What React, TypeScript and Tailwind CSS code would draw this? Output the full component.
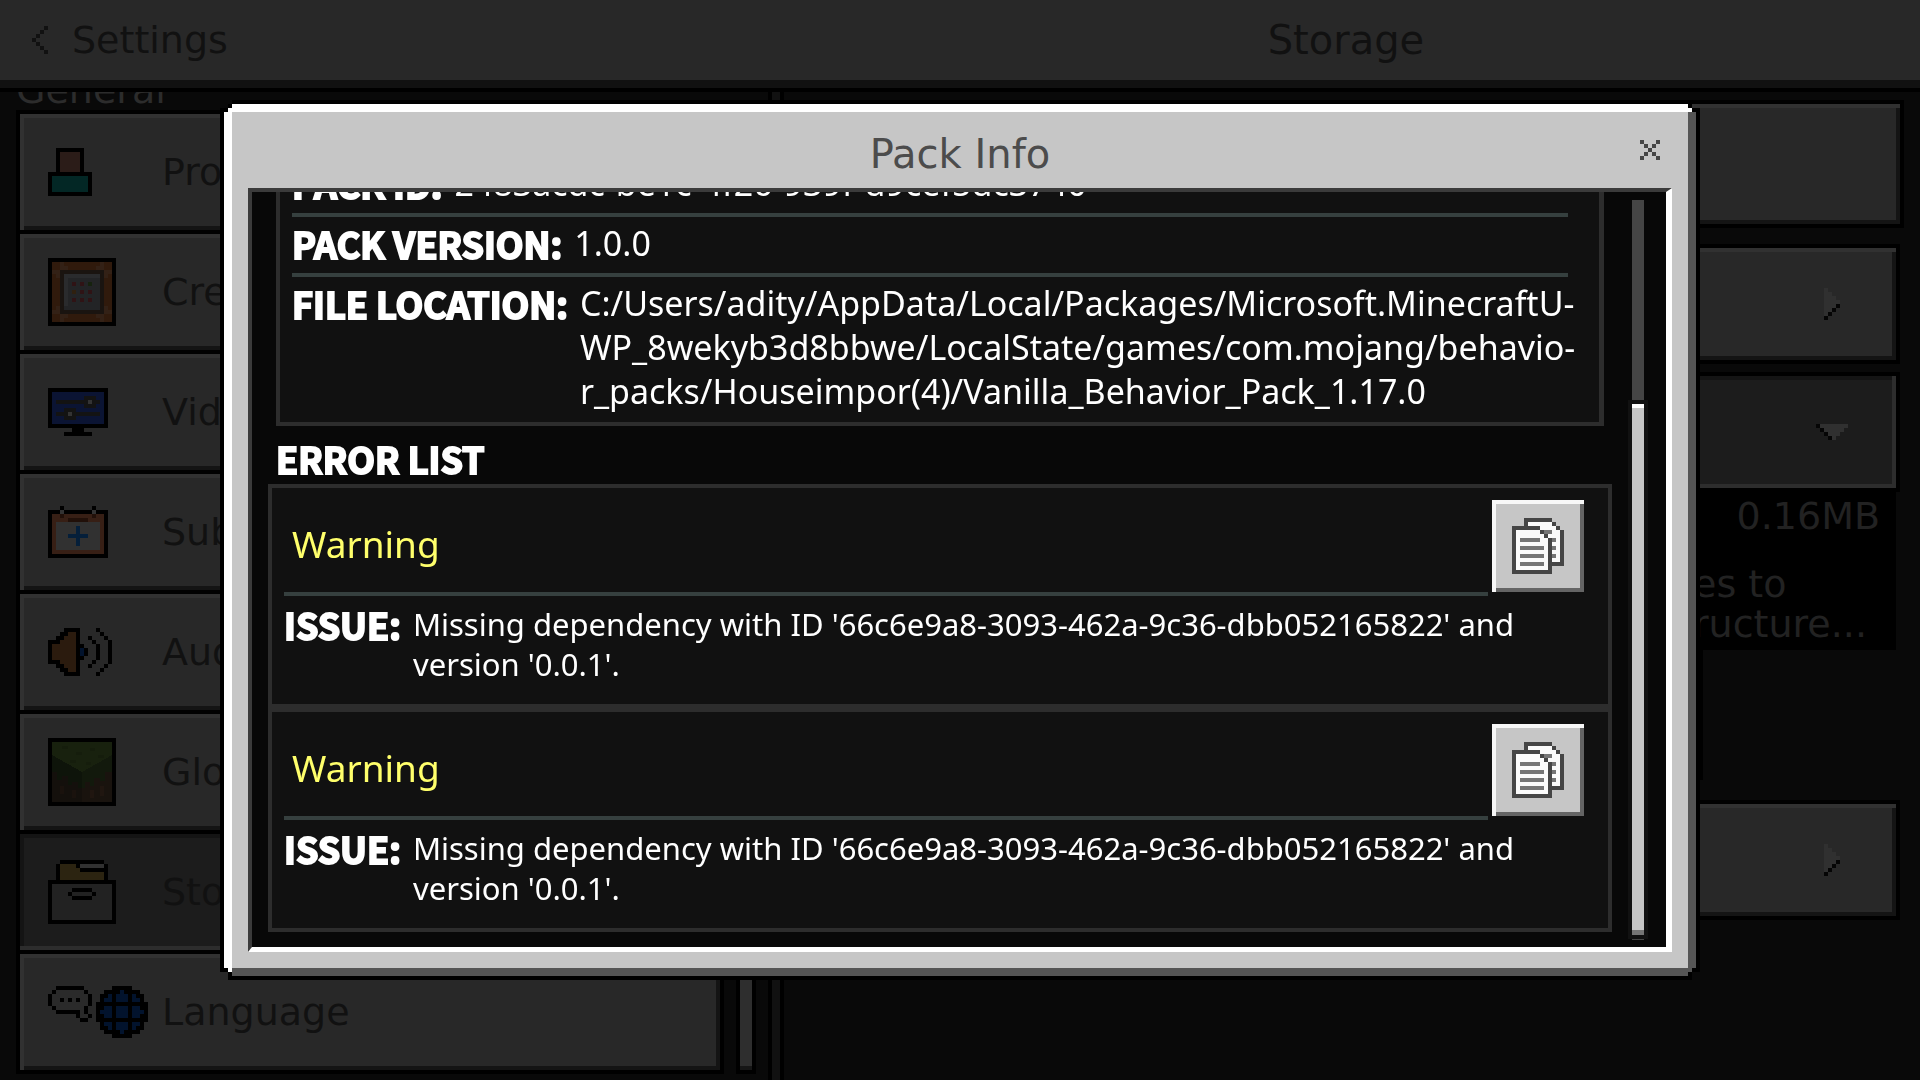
import React from 'react';

const PALETTE: Record<string, string> = {
  K: '#000000',
  D: '#454545',
  W: '#fafafa',
  G: '#757575',
  h: '#2b1c18',
  t: '#032725',
  o: '#301a0c',
  p: '#332116',
  f: '#1a1410',
  s: '#2a2b2d',
  n: '#232426',
  r: '#2f1315',
  v: '#16220e',
  y: '#2f200f',
  b: '#0b1433',
  k: '#131313',
  l: '#333333',
  w: '#313131',
  c: '#371f15',
  d: '#211009',
  B: '#051f3a',
  a: '#2b1b0e',
  u: '#02132d',
  e: '#2c2411',
  g: '#222222',
  q: '#2a2a2a',
  L: '#303030',
  X: '#050505',
  T: '#111111',
};

const PROFILE = [
  '..KKKKKKK..',
  '..KhhhhhK..',
  '..KhhhhhK..',
  '..KhhhhhK..',
  '..KhhhhhK..',
  '..KhhhhhK..',
  'KKKKKKKKKKK',
  'KtttttttttK',
  'KtttttttttK',
  'KtttttttttK',
  'KtttttttttK',
  'KKKKKKKKKKK',
];

const CREATOR = [
  'KKKKKKKKKKKKKKKKK',
  'KoopooooooooopooK',
  'KooppoooooooppooK',
  'KppfffffffffffppK',
  'KopfsssssssssfpoK',
  'KoofsnnnnnnnnfooK',
  'KoofsnrnrnvnnfooK',
  'KoofsnnnnnnnnfooK',
  'KoofsnynrnrnnfooK',
  'KoofsnnnnnnnnfooK',
  'KoofsnrnrnrnnfooK',
  'KoofsnnnnnnnnfooK',
  'KopfnnnnnnnnnfpoK',
  'KppfffffffffffppK',
  'KooppoooooooppooK',
  'KoopooooooooopooK',
  'KKKKKKKKKKKKKKKKK',
];

const VIDEO = [
  'KKKKKKKKKKKKKKK',
  'KbbbbbbbbbbbbbK',
  'KbbbbbbbbkkkbbK',
  'KbkkkkkkkklkkbK',
  'KbbbbbbbbkkkbbK',
  'KbbbkkkbbbbbbbK',
  'KbkkklkkkkkkkbK',
  'KbbbkkkbbbbbbbK',
  'KbbbbbbbbbbbbbK',
  'KKKKKKKKKKKKKKK',
  '......KKK......',
  '....KKKKKKK....',
];

const SUBSCRIPTIONS = [
  '...K.......K...',
  'KKKlKKKKKKKlKKK',
  'KccdcccccccdccK',
  'KccccdddddccccK',
  'KcwwwwwwwwwwwcK',
  'KcwwwwwBwwwwwcK',
  'KcwwwwwBwwwwwcK',
  'KcwwwBBBBBwwwcK',
  'KcwwwwwBwwwwwcK',
  'KcwwwwwBwwwwwcK',
  'KcwwwwwwwwwwwcK',
  'KcccccccccccccK',
  'KKKKKKKKKKKKKKK',
];

const AUDIO = [
  '....KKKK....K...',
  '...KKaaK.....K..',
  '..KKaaaK..K...K.',
  'KKKaaaaK...K...K',
  'KaaaaaaKK...K..K',
  'KaaaaaaKuK..K..K',
  'KaaaaaaKuK..K..K',
  'KaaaaaaKK...K..K',
  'KKKaaaaK...K...K',
  '..KKaaaK..K...K.',
  '...KKaaK.....K..',
  '....KKKK....K...',
];

const STORAGE = [
  '...KKKKKKKKKKK...',
  '..KeeeeKwwwwwwK..',
  '..KeeeeeKKKKKKK..',
  '..KeeeeeeeeeeeK..',
  '..KeeeeeeeeeeeK..',
  'KKKKKKKKKKKKKKKKK',
  'KgggggggggggggggK',
  'KgggggKKKKKgggggK',
  'KggggKgggggKggggK',
  'KgggggKKKKKgggggK',
  'KgggggggggggggggK',
  'KgggggggggggggggK',
  'KgggggggggggggggK',
  'KgggggggggggggggK',
  'KgggggggggggggggK',
  'KKKKKKKKKKKKKKKKK',
];

const LANGUAGE = [
  '..KKKKKKK.......KKKKK....',
  '.KqqqqqqqK....KKKKuKKKK..',
  'KqqqqqqqqqK..KKuKuuuKuKK.',
  'KqqKqKqKqqK..KuuKuuuKuuK.',
  'KqqqqqqqqqK.KKKKKKKKKKKKK',
  '.KqqqqqqqK..KKuuKuuuKuuKK',
  '..KKKKKKqK..KuuuKuuuKuuuK',
  '.......KqqK.KKuuKuuuKuuKK',
  '........KK..KKKKKKKKKKKKK',
  '.............KuuKuuuKuuK.',
  '.............KKuKuuuKuKK.',
  '..............KKKKuKKKK..',
  '................KKKKK....',
];

const COPY = [
  '...DDDDDDD...',
  '...DWWWWWWD..',
  'DDDDDDDWWWWD.',
  'DWWWWWWDGGWWD',
  'DWWWWWWWDWWWD',
  'DWGGGGGWWDGWD',
  'DWWWWWWWWDWWD',
  'DWGGGGGGWDGWD',
  'DWWWWWWWWDWWD',
  'DWGGGGGGWDGWD',
  'DWWWWWWWWDWWD',
  'DWGGGGGGWDDDD',
  'DWWWWWWWWD...',
  'DDDDDDDDDD...',
];

const BACK = ['...T', '..T.', '.T..', 'T...', '.T..', '..T.', '...T'];
const CLOSE = ['D...D', '.D.D.', '..D..', '.D.D.', 'D...D'];
const ARROW_RIGHT = ['L...', 'LL..', 'LLL.', 'LLLL', 'LLLX', 'LLX.', 'LX..', 'X...'];
const ARROW_DOWN = ['XLLLLLLL', '.XLLLLL.', '..XLLL..', '...XL...'];

const PixelArt: React.FC<{ rows: string[] }> = ({ rows }) => (
  <svg
    width={rows[0].length * 4}
    height={rows.length * 4}
    viewBox={`0 0 ${rows[0].length} ${rows.length}`}
    shapeRendering="crispEdges"
    className="block shrink-0"
    aria-hidden="true"
  >
    {rows.map((row, y) =>
      row.split('').map((ch, x) =>
        ch === '.' ? null : <rect key={`${x}-${y}`} x={x} y={y} width="1" height="1" fill={PALETTE[ch]} />
      )
    )}
  </svg>
);

const GrassBlock: React.FC = () => (
  <svg width="68" height="68" viewBox="0 0 68 68" shapeRendering="crispEdges" className="block shrink-0" aria-hidden="true">
    <rect width="68" height="68" fill="#000" />
    <rect x="4" y="4" width="60" height="60" fill="#19130e" />
    <path d="M4 17L34 34V64H4z" fill="#14100c" />
    <path d="M4 4H64V17L34 34L4 17z" fill="#18210e" />
    <path d="M4 17L34 34V50H30V44H24V47H20V38H14V42H9V34H4z" fill="#0e140a" />
    <path d="M64 17L34 34V50H37V44H42V48H46V40H52V43H57V34H64z" fill="#12190c" />
    <path d="M14 8h6v3h-6zM28 14h6v3h-6zM42 10h5v3h-5zM50 17h6v3h-6zM22 22h6v3h-6zM38 24h5v3h-5z" fill="#151d0c" />
    <path d="M12 48h4v8h-4zM24 52h4v8h-4z" fill="#1a120d" />
    <path d="M42 52h4v8h-4zM52 48h4v10h-4z" fill="#201610" />
  </svg>
);

const MENU = [
  { label: 'Profile', icon: <PixelArt rows={PROFILE} /> },
  { label: 'Creator', icon: <PixelArt rows={CREATOR} /> },
  { label: 'Video', icon: <PixelArt rows={VIDEO} /> },
  { label: 'Sub', icon: <PixelArt rows={SUBSCRIPTIONS} /> },
  { label: 'Audio', icon: <PixelArt rows={AUDIO} /> },
  { label: 'Global', icon: <GrassBlock /> },
  { label: 'Storage', icon: <PixelArt rows={STORAGE} />, selected: true },
  { label: 'Language', icon: <PixelArt rows={LANGUAGE} /> },
];

const RAISED = 'bg-[#282828] shadow-[inset_4px_4px_0_#313131,inset_-4px_-4px_0_#141414]';
const PRESSED = 'bg-[#1c1c1c] shadow-[inset_-4px_-4px_0_#2d2d2d,inset_4px_4px_0_#141414]';

const LABEL_FONT =
  "font-['Noto_Sans_CJK_JP',sans-serif] font-bold text-[36px] text-white uppercase whitespace-nowrap [-webkit-text-stroke:2px_white]";

const TopBar: React.FC = () => (
  <header className="flex h-[92px] shrink-0 items-center border-b-4 border-black bg-[#282828] shadow-[inset_0_-8px_0_#111111] pb-2 text-[#111111]">
    <div className="w-[40.2%] pl-8">
      <button className="flex items-center gap-6 leading-10">
        <PixelArt rows={BACK} />
        <span>Settings</span>
      </button>
    </div>
    <h1 className="flex-1 text-center text-[40px] leading-10">Storage</h1>
  </header>
);

const Sidebar: React.FC = () => (
  <nav className="w-[40.2%] shrink-0 overflow-hidden border-r-4 border-black pl-4 pr-3">
    <h2 className="-mt-[22px] leading-10 text-[#2c2c2c]">General</h2>
    <div className="flex gap-3">
      <ul className="flex flex-1 flex-col gap-1 bg-black p-1">
        {MENU.map((item) => (
          <li key={item.label}>
            <button
              className={`flex h-[116px] w-full items-center pl-7 text-left text-[#111111] ${item.selected ? PRESSED : RAISED}`}
            >
              <span className="w-[114px] shrink-0">{item.icon}</span>
              <span className="leading-10">{item.label}</span>
            </button>
          </li>
        ))}
      </ul>
      <div className="w-5 border-4 border-black bg-[#2e2e2e] shadow-[inset_0_-4px_0_#161616]"></div>
    </div>
  </nav>
);

const StoragePanel: React.FC = () => (
  <main className="flex-1 overflow-hidden border-l-4 border-black pl-5 pr-4 pt-2">
    <div className="border-4 border-black">
      <div className={`h-[120px] ${RAISED}`}></div>
    </div>
    <div className="mr-1">
      <div className="mt-4 border-4 border-black">
        <button aria-label="Open section" className={`flex h-28 w-full items-center justify-end pr-14 ${RAISED}`}>
          <PixelArt rows={ARROW_RIGHT} />
        </button>
      </div>
      <div className="mt-2 border-4 border-black">
        <button aria-label="Collapse section" className={`flex h-28 w-full items-center justify-end pr-12 ${PRESSED}`}>
          <PixelArt rows={ARROW_DOWN} />
        </button>
      </div>
      <div className="mr-1 h-[158px] bg-black pt-1 text-[#222222]">
        <p className="pr-4 text-right leading-10">0.16MB</p>
        <p className="ml-auto mt-7 w-[203px] leading-10">
          es to
          <br />
          ructure...
        </p>
      </div>
      <div className="mr-[197px] h-[130px] bg-black"></div>
      <div className="mt-5 border-4 border-black">
        <button aria-label="Open section" className={`flex h-28 w-full items-center justify-end pr-14 ${RAISED}`}>
          <PixelArt rows={ARROW_RIGHT} />
        </button>
      </div>
    </div>
  </main>
);

const InfoRow: React.FC<{ label: string; last?: boolean; children: React.ReactNode }> = ({ label, last, children }) => (
  <div className={last ? 'pt-1 pb-[9px]' : 'mr-[31px] border-b-4 border-[#36403f] pt-1 pb-2'}>
    <div className="flex gap-3 leading-[44px]">
      <dt className={LABEL_FONT}>{label}</dt>
      <dd className="whitespace-nowrap font-['Noto_Sans',sans-serif] text-[34px] text-white">{children}</dd>
    </div>
  </div>
);

const ErrorCard: React.FC = () => (
  <li className="border-4 border-[#2d2d2d] bg-[#111111] pt-3 pr-6 pb-5 pl-3">
    <div className="flex items-start gap-1">
      <div className="flex h-24 flex-1 items-center border-b-4 border-[#36403f] pb-1 pl-2">
        <h4 className="font-['Noto_Sans',sans-serif] text-[37px] leading-[44px] text-[#ffff6b]">Warning</h4>
      </div>
      <button
        aria-label="Copy"
        className="flex size-[92px] items-center justify-center bg-[#c6c6c6] shadow-[inset_4px_4px_0_#f7f7f7,inset_-4px_-4px_0_#656565]"
      >
        <PixelArt rows={COPY} />
      </button>
    </div>
    <div className="flex gap-3 pt-2 leading-10">
      <span className={LABEL_FONT}>Issue:</span>
      <p className="font-['Noto_Sans',sans-serif] text-[31px] text-white">
        Missing dependency with ID '66c6e9a8-3093-462a-9c36-dbb052165822' and version '0.0.1'.
      </p>
    </div>
  </li>
);

const PackInfoDialog: React.FC = () => (
  <div className="fixed inset-0 flex px-[220px] py-[100px]">
    <div className="flex min-w-0 flex-1 bg-black p-1 [clip-path:polygon(12px_0,calc(100%-12px)_0,calc(100%-12px)_4px,calc(100%-8px)_4px,calc(100%-8px)_8px,100%_8px,100%_calc(100%-8px),calc(100%-8px)_calc(100%-8px),calc(100%-8px)_100%,8px_100%,8px_calc(100%-8px),0_calc(100%-8px),0_8px,8px_8px,8px_4px,12px_4px)]">
      <section
        role="dialog"
        aria-label="Pack Info"
        className="flex min-w-0 flex-1 flex-col bg-[#c6c6c6] px-6 pt-2 pb-6 shadow-[inset_8px_8px_0_#ffffff,inset_-8px_-8px_0_#555555] [clip-path:polygon(8px_0,calc(100%-8px)_0,calc(100%-8px)_4px,calc(100%-4px)_4px,calc(100%-4px)_8px,100%_8px,100%_calc(100%-8px),calc(100%-4px)_calc(100%-8px),calc(100%-4px)_calc(100%-4px),calc(100%-8px)_calc(100%-4px),calc(100%-8px)_100%,8px_100%,8px_calc(100%-4px),4px_calc(100%-4px),4px_calc(100%-8px),0_calc(100%-8px),0_8px,4px_8px,4px_4px,8px_4px)]"
      >
        <div className="flex h-[76px] shrink-0 items-center text-[#4c4c4c]">
          <div className="w-11"></div>
          <h2 className="flex-1 pt-2 text-center text-[40px] leading-10">Pack Info</h2>
          <button aria-label="Close" className="flex w-11 justify-center">
            <PixelArt rows={CLOSE} />
          </button>
        </div>
        <div className="flex min-h-0 flex-1 gap-4 border-t-4 border-r-[6px] border-b-[5px] border-l-4 border-t-[#3b3b3b] border-r-white border-b-white border-l-[#3b3b3b] bg-[#080808] pl-4 pr-[18px]">
          <div className="flex min-w-0 flex-1 flex-col justify-end overflow-hidden pb-[15px]">
            <dl className="mx-2 border-4 border-r-[5px] border-[#2d2d2d] bg-[#111111] pl-3">
              <InfoRow label="Pack ID:">2483acdc-be1c-4f26-939f-d9cef5dc3740</InfoRow>
              <InfoRow label="Pack Version:">1.0.0</InfoRow>
              <InfoRow label="File Location:" last>
                C:/Users/adity/AppData/Local/Packages/Microsoft.MinecraftU-
                <br />
                WP_8wekyb3d8bbwe/LocalState/games/com.mojang/behavio-
                <br />
                r_packs/Houseimpor(4)/Vanilla_Behavior_Pack_1.17.0
              </InfoRow>
            </dl>
            <h3 className={`pt-3 pb-[6px] pl-2 leading-10 ${LABEL_FONT}`}>Error List</h3>
            <ul>
              <ErrorCard />
              <ErrorCard />
            </ul>
          </div>
          <div className="flex w-5 flex-col pt-2 pb-[7px]">
            <div className="mx-1 h-[27%] bg-[#454545]"></div>
            <div className="flex-1 border-4 border-[#111111] bg-[#c6c6c6] shadow-[inset_0_4px_0_#ffffff,inset_0_-5px_0_#757575]"></div>
            <div className="mx-1 h-px bg-[#454545]"></div>
          </div>
        </div>
      </section>
    </div>
  </div>
);

const App: React.FC = () => {
  return (
    <div className="flex h-screen flex-col overflow-hidden bg-[#090909] font-['DejaVu_Sans',sans-serif] text-[38px]">
      <TopBar />
      <div className="flex min-h-0 flex-1">
        <Sidebar />
        <div className="w-2 bg-[#111111]"></div>
        <StoragePanel />
      </div>
      <PackInfoDialog />
    </div>
  );
};

export default App;
